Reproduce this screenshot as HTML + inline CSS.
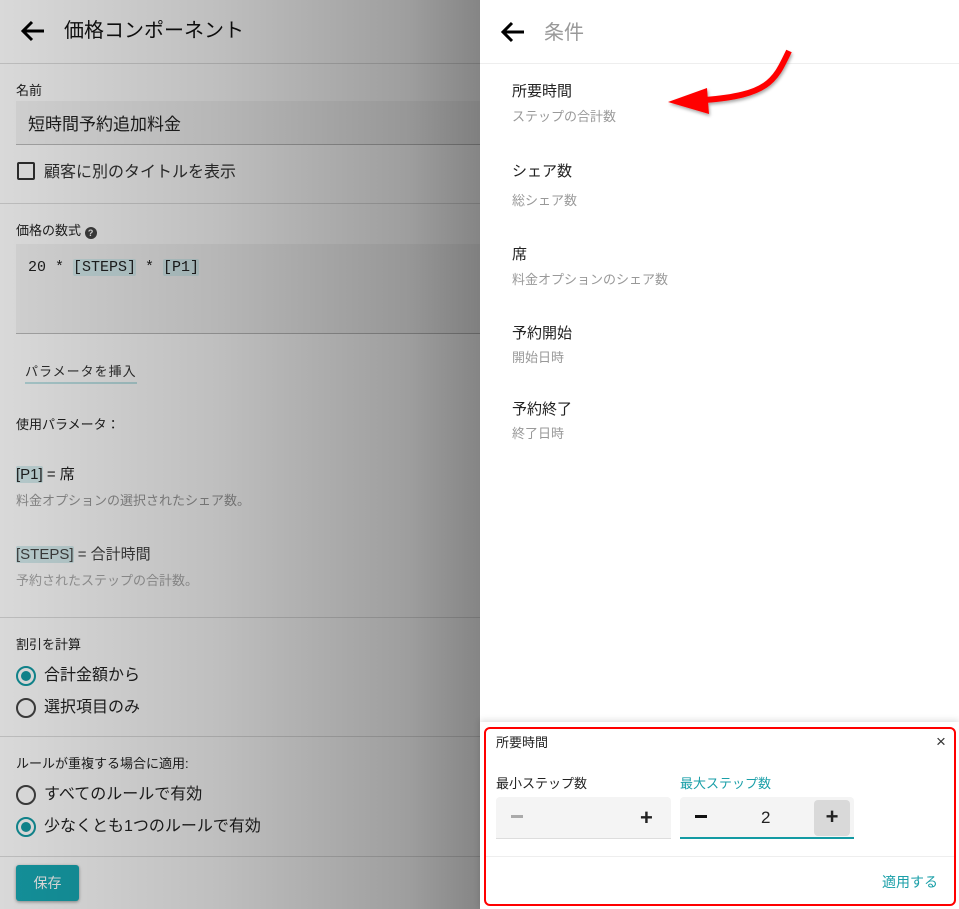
<!DOCTYPE html>
<html><head><meta charset="utf-8"><style>
*{box-sizing:border-box;margin:0;padding:0}
body{width:959px;height:909px;overflow:hidden;font-family:"Liberation Sans","Noto Sans CJK JP",sans-serif;background:#fff;position:relative;color:#222}
.abs{position:absolute;white-space:nowrap;line-height:1.25}
#left{position:absolute;left:0;top:0;width:480px;height:909px;background:#fff;overflow:hidden}
.hr{position:absolute;left:0;width:480px;height:1px;background:#ddd}
#ov{position:absolute;left:0;top:0;width:480px;height:909px;background:linear-gradient(90deg,rgba(0,0,0,.15) 0%,rgba(0,0,0,.25) 45%,rgba(0,0,0,.38) 85%,rgba(0,0,0,.48) 100%)}
.radio{position:absolute;width:20px;height:20px;border-radius:50%;border:2px solid #444}
.radio.on{border-color:#139aa3}
.radio.on:after{content:"";position:absolute;left:3px;top:3px;width:10px;height:10px;border-radius:50%;background:#139aa3}
.tag{background:#d5ecee;border-radius:2px}
.r .t{font-size:15px;color:#222}
.r .s{font-size:13px;color:#999}
</style></head><body>
<div id="left">
 <svg class="abs" style="left:20px;top:19px" width="26" height="24" viewBox="0 0 26 24"><path d="M24 12H4M12 3L3 12l9 9" fill="none" stroke="#000" stroke-width="3"/></svg>
 <div class="abs" style="left:64px;top:19px;font-size:20px;color:#111">価格コンポーネント</div>
 <div class="hr" style="top:63px"></div>
 <div class="abs" style="left:16px;top:83px;font-size:13px">名前</div>
 <div class="abs" style="left:16px;top:101px;width:470px;height:44px;background:#f4f4f4;border-bottom:1px solid #bbb"></div>
 <div class="abs" style="left:28px;top:114px;font-size:17px">短時間予約追加料金</div>
 <div class="abs" style="left:17px;top:162px;width:18px;height:18px;border:2px solid #333;border-radius:2px"></div>
 <div class="abs" style="left:44px;top:163px;font-size:16px;color:#333">顧客に別のタイトルを表示</div>
 <div class="hr" style="top:203px"></div>
 <div class="abs" style="left:16px;top:223px;font-size:13px">価格の数式 <span style="display:inline-block;width:12px;height:12px;border-radius:50%;background:#444;color:#fff;font-size:9px;text-align:center;line-height:12px;font-weight:bold;vertical-align:-1px">?</span></div>
 <div class="abs" style="left:16px;top:244px;width:470px;height:90px;background:#f4f4f4;border-bottom:1px solid #bbb"></div>
 <div class="abs" style="left:28px;top:259px;font-size:15px;font-family:'Liberation Mono',monospace">20 * <span class="tag">[STEPS]</span> * <span class="tag">[P1]</span></div>
 <div class="abs" style="left:25px;top:364px;font-size:13px;color:#333;letter-spacing:1px;border-bottom:2px solid #bfe3e6;padding-bottom:2px">パラメータを挿入</div>
 <div class="abs" style="left:16px;top:417px;font-size:13px">使用パラメータ：</div>
 <div class="abs" style="left:16px;top:466px;font-size:15px"><span class="tag">[P1]</span> = 席</div>
 <div class="abs" style="left:16px;top:493px;font-size:13px;color:#999">料金オプションの選択されたシェア数。</div>
 <div class="abs" style="left:16px;top:546px;font-size:15px;color:#444"><span class="tag">[STEPS]</span> = 合計時間</div>
 <div class="abs" style="left:16px;top:573px;font-size:13px;color:#aaa">予約されたステップの合計数。</div>
 <div class="hr" style="top:617px"></div>
 <div class="abs" style="left:16px;top:637px;font-size:13px">割引を計算</div>
 <div class="radio on" style="left:16px;top:666px"></div>
 <div class="abs" style="left:44px;top:666px;font-size:16px">合計金額から</div>
 <div class="radio" style="left:16px;top:698px"></div>
 <div class="abs" style="left:44px;top:698px;font-size:16px">選択項目のみ</div>
 <div class="hr" style="top:736px"></div>
 <div class="abs" style="left:16px;top:756px;font-size:13px">ルールが重複する場合に適用:</div>
 <div class="radio" style="left:16px;top:785px"></div>
 <div class="abs" style="left:44px;top:785px;font-size:16px">すべてのルールで有効</div>
 <div class="radio on" style="left:16px;top:817px"></div>
 <div class="abs" style="left:44px;top:817px;font-size:16px">少なくとも1つのルールで有効</div>
 <div class="hr" style="top:856px"></div>
 <div class="abs" style="left:16px;top:865px;width:63px;height:36px;background:#17a8b3;border-radius:3px;box-shadow:0 1px 3px rgba(0,0,0,.4);color:#fff;font-size:14px;text-align:center;line-height:36px">保存</div>
 <div id="ov"></div>
</div>
<div class="r">
 <svg class="abs" style="left:500px;top:20px" width="26" height="24" viewBox="0 0 26 24"><path d="M24 12H4M12 3L3 12l9 9" fill="none" stroke="#000" stroke-width="3"/></svg>
 <div class="abs" style="left:544px;top:21px;font-size:20px;color:#999">条件</div>
 <div class="abs" style="left:480px;top:63px;width:479px;height:1px;background:#eee"></div>
 <div class="abs t" style="left:512px;top:83px">所要時間</div><div class="abs s" style="left:512px;top:109px">ステップの合計数</div>
 <div class="abs t" style="left:512px;top:163px">シェア数</div><div class="abs s" style="left:512px;top:193px">総シェア数</div>
 <div class="abs t" style="left:512px;top:246px">席</div><div class="abs s" style="left:512px;top:272px">料金オプションのシェア数</div>
 <div class="abs t" style="left:512px;top:325px">予約開始</div><div class="abs s" style="left:512px;top:350px">開始日時</div>
 <div class="abs t" style="left:512px;top:401px">予約終了</div><div class="abs s" style="left:512px;top:426px">終了日時</div>
</div>
<svg class="abs" style="left:0;top:0" width="959" height="909"><defs><filter id="sh"><feDropShadow dx="1" dy="2" stdDeviation="1.5" flood-opacity=".35"/></filter></defs><g filter="url(#sh)"><path d="M789 51C775 80 770 95 705 100" fill="none" stroke="#f00" stroke-width="6"/><path d="M668 102L707 88L709 114Z" fill="#f00"/></g></svg>
<div class="abs" style="left:480px;top:722px;width:479px;height:187px;background:#fff;box-shadow:0 -2px 6px rgba(0,0,0,.12)"></div>
<div class="abs" style="left:484px;top:727px;width:472px;height:179px;border:2px solid #f00;border-radius:6px"></div>
<div class="abs" style="left:496px;top:735px;font-size:13px">所要時間</div>
<div class="abs" style="left:936px;top:731px;font-size:17px;color:#333">×</div>
<div class="abs" style="left:496px;top:776px;font-size:13px">最小ステップ数</div>
<div class="abs" style="left:680px;top:776px;font-size:13px;color:#1a9fa8">最大ステップ数</div>
<div class="abs" style="left:496px;top:797px;width:175px;height:42px;background:#f4f4f4;border-bottom:1px solid #ddd;border-radius:4px 4px 0 0"></div>
<div class="abs" style="left:511px;top:815px;width:12px;height:3px;background:#aaa"></div>
<div class="abs" style="left:640px;top:804px;font-size:22px;font-weight:bold">+</div>
<div class="abs" style="left:680px;top:797px;width:174px;height:42px;background:#f4f4f4;border-bottom:2px solid #139aa3;border-radius:4px 4px 0 0"></div>
<div class="abs" style="left:695px;top:815px;width:12px;height:3px;background:#111"></div>
<div class="abs" style="left:761px;top:807px;font-size:17px">2</div>
<div class="abs" style="left:814px;top:800px;width:36px;height:36px;background:#d9d9d9;border-radius:4px;text-align:center;line-height:34px;font-size:22px;font-weight:bold">+</div>
<div class="abs" style="left:486px;top:856px;width:468px;height:1px;background:#eee"></div>
<div class="abs" style="left:882px;top:874px;font-size:14px;color:#1a9fa8">適用する</div>
</body></html>
